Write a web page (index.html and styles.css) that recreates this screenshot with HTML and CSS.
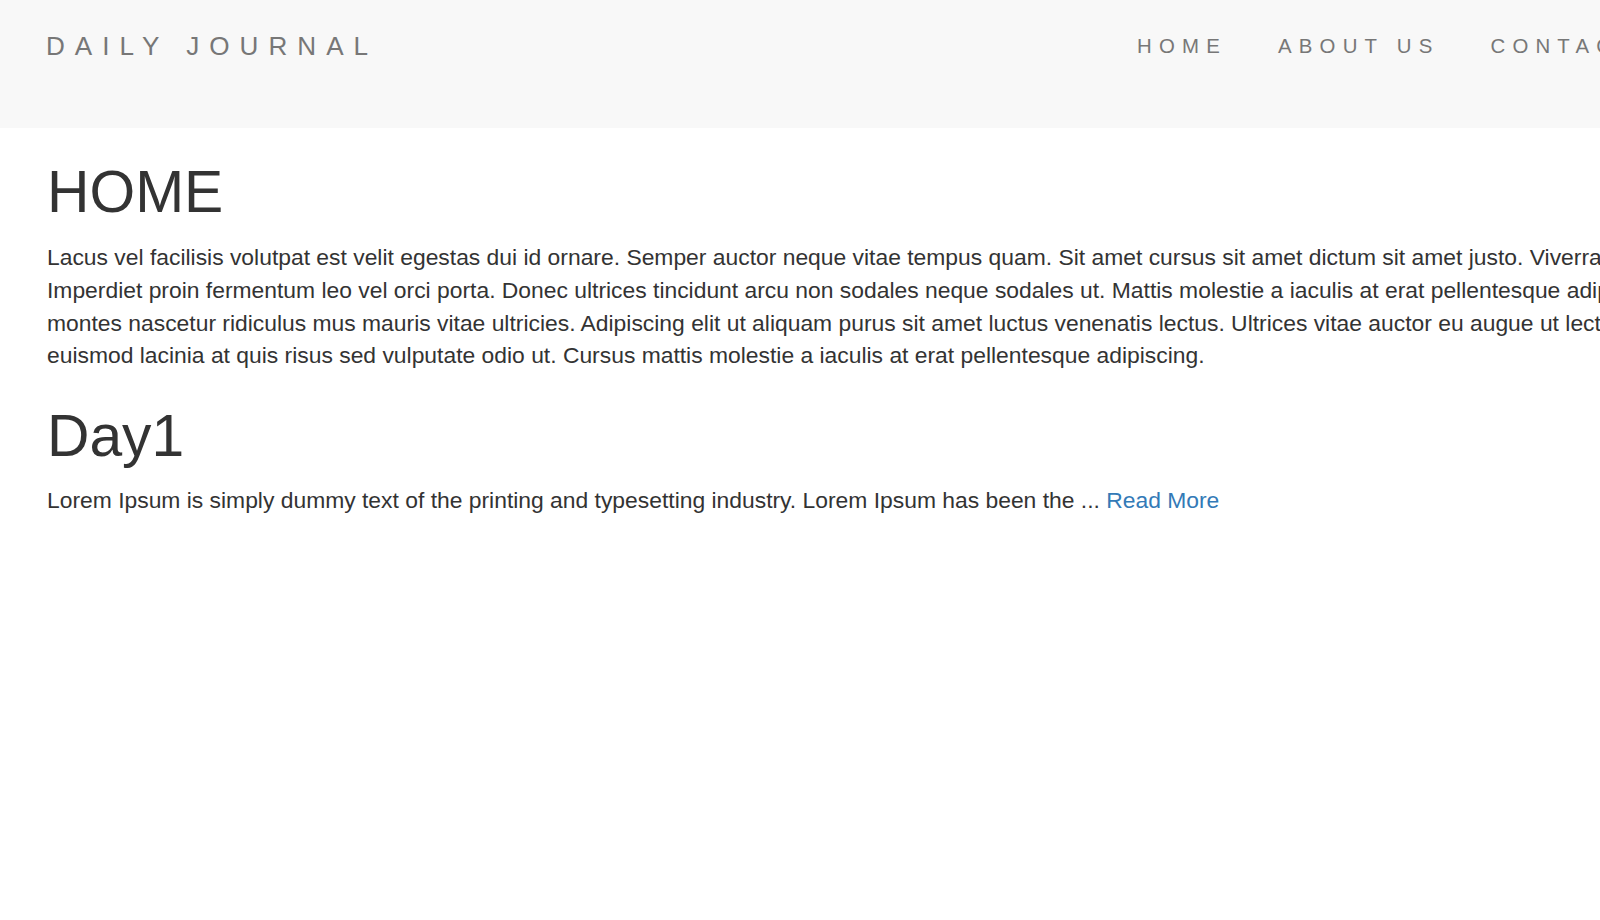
FILE: index.html
```html
<!DOCTYPE html>
<html lang="en">
<head>
<meta charset="utf-8">
<title>Daily Journal</title>
<link rel="stylesheet" href="styles.css">
</head>
<body>
<header class="navbar">
  <a class="brand" href="#">DAILY JOURNAL</a>
  <nav class="nav">
    <a class="nav-link" href="#">HOME</a>
    <a class="nav-link" href="#">ABOUT US</a>
    <a class="nav-link" href="#">CONTACT US</a>
  </nav>
</header>
<main class="container">
  <section class="intro">
    <h1 class="title">HOME</h1>
    <p class="lead">Lacus vel facilisis volutpat est velit egestas dui id ornare. Semper auctor neque vitae tempus quam. Sit amet cursus sit amet dictum sit amet justo. Viverra vitae congue eu consequat ac felis donec et odio.<br>Imperdiet proin fermentum leo vel orci porta. Donec ultrices tincidunt arcu non sodales neque sodales ut. Mattis molestie a iaculis at erat pellentesque adipiscing commodo elit at imperdiet. Parturient<br>montes nascetur ridiculus mus mauris vitae ultricies. Adipiscing elit ut aliquam purus sit amet luctus venenatis lectus. Ultrices vitae auctor eu augue ut lectus arcu bibendum at varius vel pharetra. Sapien<br>euismod lacinia at quis risus sed vulputate odio ut. Cursus mattis molestie a iaculis at erat pellentesque adipiscing.</p>
  </section>
  <article class="post">
    <h1 class="title post-title">Day1</h1>
    <p class="excerpt">Lorem Ipsum is simply dummy text of the printing and typesetting industry. Lorem Ipsum has been the ... <a class="more" href="#">Read More</a></p>
  </article>
</main>
</body>
</html>
```
FILE: styles.css
```css
html, body {
  margin: 0;
  padding: 0;
  overflow-x: hidden;
  background: #fff;
}
body {
  font-family: "Liberation Sans", Arial, Helvetica, sans-serif;
  font-size: 22.86px;
  line-height: 32.65px;
  color: #333;
}
a { text-decoration: none; }

.navbar {
  box-sizing: border-box;
  height: 127.6px;
  background: #f8f8f8;
  display: flex;
  align-items: flex-start;
  padding: 31.6px 0 0 46px;
  white-space: nowrap;
}
.brand {
  flex: 0 0 1091px;
  font-size: 26.1px;
  line-height: 29.2px;
  letter-spacing: 10px;
  color: #777;
}
.nav {
  display: flex;
  gap: 51px;
  margin-top: 2.5px;
}
.nav-link {
  font-size: 20.4px;
  line-height: 24px;
  letter-spacing: 7.2px;
  color: #777;
}

.container {
  padding: 0 47px;
  white-space: nowrap;
}
.title {
  font-weight: 500;
  font-size: 58.78px;
  line-height: 1.1;
  margin: 32.65px 0 16.33px;
  color: #333;
}
.post-title {
  margin-bottom: 15.3px;
}
.intro p {
  margin: 3px 0 0;
}
.excerpt {
  margin: 0;
}
.more {
  color: #337ab7;
}
```
